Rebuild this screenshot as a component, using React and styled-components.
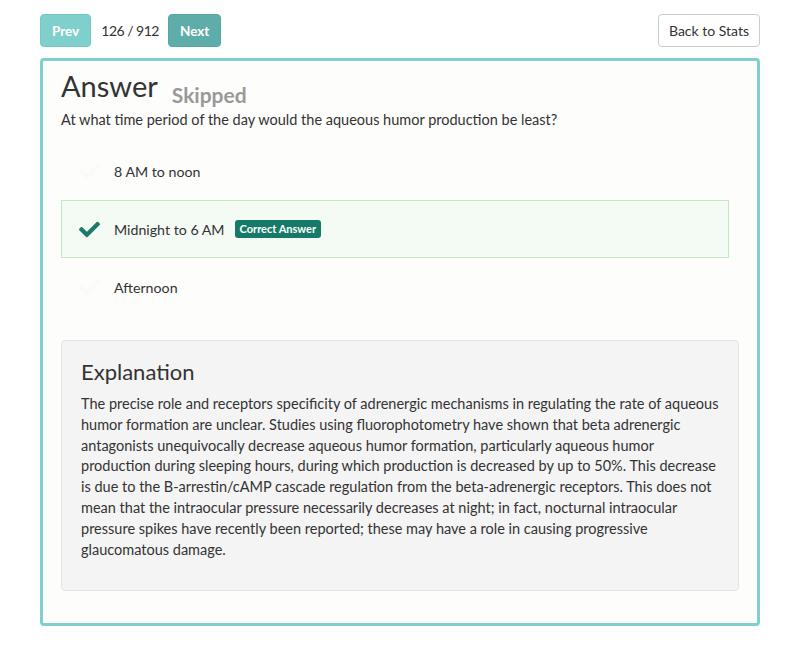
import React from "react";
import styled, { createGlobalStyle } from "styled-components";
import { FaCheck } from "react-icons/fa";

const Global = createGlobalStyle`
  html, body { margin: 0; padding: 0; background: #ffffff; }
  body { font-family: Lato, "Noto Sans", sans-serif; color: #333333; }
  * { box-sizing: border-box; }
`;

const Page = styled.div`
  width: 720px;
  margin: 0 0 0 40px;
  padding-top: 14px;
`;

const Toolbar = styled.div`
  display: flex;
  align-items: center;
  height: 33px;
`;

const NavButton = styled.button`
  height: 33px;
  padding: 0 11px;
  border: 1px solid ${(p) => (p.$disabled ? "#74c8c5" : "#57a6a2")};
  border-radius: 4px;
  background: ${(p) => (p.$disabled ? "#7fcfcc" : "#5fadaa")};
  color: #ffffff;
  font-family: Lato, sans-serif;
  font-weight: 700;
  font-size: 13.5px;
  cursor: pointer;
`;

const Counter = styled.span`
  font-size: 14px;
  letter-spacing: -0.5px;
  color: #333;
  margin: 0 9px 0 10px;
`;

const Spacer = styled.div`
  flex: 1;
`;

const OutlineButton = styled.button`
  height: 33px;
  padding: 0 10px;
  border: 1px solid #cccccc;
  border-radius: 4px;
  background: #ffffff;
  color: #333;
  font-family: Lato, sans-serif;
  font-size: 14px;
`;

const Card = styled.section`
  margin-top: 11px;
  border: 3px solid #7fcfcc;
  border-radius: 4px;
  background: #fdfdfc;
  padding: 8px 18px 32px 18px;
`;

const TitleRow = styled.div`
  display: flex;
  align-items: flex-end;
  gap: 14px;
  height: 33px;
`;

const Title = styled.h1`
  margin: 0;
  font-size: 29px;
  font-weight: 400;
  line-height: 32px;
  color: #333;
`;

const Status = styled.span`
  font-size: 21px;
  font-weight: 700;
  color: #999999;
  line-height: 22px;
  margin-bottom: -4px;
`;

const Question = styled.p`
  margin: 8px 0 0 0;
  font-size: 14.5px;
  line-height: 20px;
`;

const Options = styled.div`
  margin: 12px 10px 0 0;
  display: flex;
  flex-direction: column;
`;

const Option = styled.div`
  display: flex;
  align-items: center;
  height: 58px;
  padding-left: 17px;
  border: 1px solid ${(p) => (p.$correct ? "#c3e6c3" : "transparent")};
  background: ${(p) => (p.$correct ? "#f4faf4" : "transparent")};
  font-size: 14.2px;
`;

const IconSlot = styled.span`
  width: 22px;
  height: 20px;
  margin-right: 13px;
  display: flex;
  align-items: center;
  color: ${(p) => (p.$on ? "#1b7a6a" : "#fafaf8")};
`;

const Badge = styled.span`
  margin-left: 10px;
  background: #177a69;
  color: #fff;
  font-size: 11px;
  font-weight: 700;
  line-height: 18px;
  padding: 0 5px;
  border-radius: 3px;
`;

const Well = styled.div`
  margin-top: 24px;
  background: #f4f4f4;
  border: 1px solid #e3e3e3;
  border-radius: 4px;
  padding: 18px 19px 30px 19px;
`;

const WellTitle = styled.h3`
  margin: 0 0 9px 0;
  font-size: 22px;
  font-weight: 400;
  line-height: 26px;
  color: #333;
`;

const WellText = styled.p`
  margin: 0;
  font-size: 14.5px;
  line-height: 20.8px;
  color: #333;
`;

const options = [
  { text: "8 AM to noon" },
  { text: "Midnight to 6 AM", correct: true },
  { text: "Afternoon" },
];

export default function App() {
  return (
    <>
      <Global />
      <Page>
        <Toolbar>
          <NavButton $disabled>Prev</NavButton>
          <Counter>126 / 912</Counter>
          <NavButton>Next</NavButton>
          <Spacer />
          <OutlineButton>Back to Stats</OutlineButton>
        </Toolbar>
        <Card>
          <TitleRow>
            <Title>Answer</Title>
            <Status>Skipped</Status>
          </TitleRow>
          <Question>At what time period of the day would the aqueous humor production be least?</Question>
          <Options>
            {options.map((o) => (
              <Option key={o.text} $correct={o.correct}>
                <IconSlot $on={o.correct}>
                  <FaCheck size={21} />
                </IconSlot>
                {o.text}
                {o.correct ? <Badge>Correct Answer</Badge> : null}
              </Option>
            ))}
          </Options>
          <Well>
            <WellTitle>Explanation</WellTitle>
            <WellText>
              The precise role and receptors specificity of adrenergic mechanisms in regulating the rate of aqueous
              humor formation are unclear. Studies using fluorophotometry have shown that beta adrenergic
              antagonists unequivocally decrease aqueous humor formation, particularly aqueous humor production
              during sleeping hours, during which production is decreased by up to 50%. This decrease is due to the
              B-arrestin/cAMP cascade regulation from the beta-adrenergic receptors. This does not mean that the
              intraocular pressure necessarily decreases at night; in fact, nocturnal intraocular pressure spikes
              have recently been reported; these may have a role in causing progressive glaucomatous damage.
            </WellText>
          </Well>
        </Card>
      </Page>
    </>
  );
}
